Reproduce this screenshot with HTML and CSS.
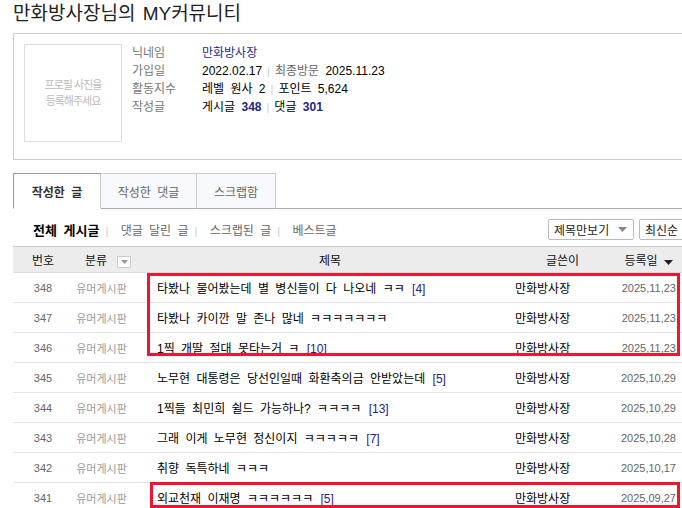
FILE: index.html
```html
<!DOCTYPE html>
<html lang="ko">
<head>
  <meta charset="UTF-8">
  <title>MY커뮤니티</title>
  <link rel="stylesheet" href="styles.css">
</head>
<body>
  <div class="wrap">
    <h1 class="page-title">만화방사장님의 MY커뮤니티</h1>

    <div class="profile">
      <div class="photo">프로필 사진을<br>등록해주세요</div>
      <div class="info">
        <div class="info-row"><span class="label">닉네임</span><span class="value nick">만화방사장</span></div>
        <div class="info-row"><span class="label">가입일</span><span class="value">2022.02.17<span class="sep">|</span><span class="dim">최종방문</span> 2025.11.23</span></div>
        <div class="info-row"><span class="label">활동지수</span><span class="value">레벨 원사 2<span class="sep">|</span>포인트 5,624</span></div>
        <div class="info-row"><span class="label">작성글</span><span class="value">게시글 <b class="count">348</b><span class="sep">|</span>댓글 <b class="count">301</b></span></div>
      </div>
    </div>

    <ul class="tabs">
      <li class="tab active">작성한 글</li>
      <li class="tab">작성한 댓글</li>
      <li class="tab">스크랩함</li>
    </ul>

    <div class="filter-bar">
      <div class="filters">
        <a href="#" class="on">전체 게시글</a><span class="sep">|</span>
        <a href="#">댓글 달린 글</a><span class="sep">|</span>
        <a href="#">스크랩된 글</a><span class="sep">|</span>
        <a href="#">베스트글</a>
      </div>
      <div class="sorts">
        <span class="select sel-view">제목만보기 <svg width="9" height="5" viewBox="0 0 9 5"><path d="M0 0h9L4.5 5z" fill="#888"/></svg></span>
        <span class="select sel-order">최신순 <svg width="9" height="5" viewBox="0 0 9 5"><path d="M0 0h9L4.5 5z" fill="#888"/></svg></span>
      </div>
    </div>

    <div class="list-box">
      <table class="post-table">
        <colgroup>
          <col style="width:60px">
          <col style="width:57px">
          <col style="width:370px">
          <col style="width:100px">
          <col style="width:93px">
        </colgroup>
        <thead>
          <tr>
            <th class="c-no">번호</th>
            <th class="c-cat">분류 <span class="mini-drop"><svg width="7" height="4" viewBox="0 0 7 4"><path d="M0 0h7L3.5 4z" fill="#999"/></svg></span></th>
            <th class="c-title">제목</th>
            <th class="c-author">글쓴이</th>
            <th class="c-date">등록일 <svg width="9" height="5" viewBox="0 0 9 5"><path d="M0 0h9L4.5 5z" fill="#222"/></svg></th>
          </tr>
        </thead>
        <tbody>
          <tr><td class="c-no">348</td><td class="c-cat">유머게시판</td><td class="c-title">타봤나 물어봤는데 별 병신들이 다 나오네 ㅋㅋ <span class="cmt">[4]</span></td><td class="c-author">만화방사장</td><td class="c-date">2025,11,23</td></tr>
          <tr><td class="c-no">347</td><td class="c-cat">유머게시판</td><td class="c-title">타봤나 카이깐 말 존나 많네 ㅋㅋㅋㅋㅋㅋㅋ</td><td class="c-author">만화방사장</td><td class="c-date">2025,11,23</td></tr>
          <tr><td class="c-no">346</td><td class="c-cat">유머게시판</td><td class="c-title">1찍 개딸 절대 못타는거 ㅋ <span class="cmt">[10]</span></td><td class="c-author">만화방사장</td><td class="c-date">2025,11,23</td></tr>
          <tr><td class="c-no">345</td><td class="c-cat">유머게시판</td><td class="c-title">노무현 대통령은 당선인일때 화환축의금 안받았는데 <span class="cmt">[5]</span></td><td class="c-author">만화방사장</td><td class="c-date">2025,10,29</td></tr>
          <tr><td class="c-no">344</td><td class="c-cat">유머게시판</td><td class="c-title">1찍들 최민희 쉴드 가능하나? ㅋㅋㅋㅋ <span class="cmt">[13]</span></td><td class="c-author">만화방사장</td><td class="c-date">2025,10,29</td></tr>
          <tr><td class="c-no">343</td><td class="c-cat">유머게시판</td><td class="c-title">그래 이게 노무현 정신이지 ㅋㅋㅋㅋㅋ <span class="cmt">[7]</span></td><td class="c-author">만화방사장</td><td class="c-date">2025,10,28</td></tr>
          <tr><td class="c-no">342</td><td class="c-cat">유머게시판</td><td class="c-title">취향 독특하네 ㅋㅋㅋ</td><td class="c-author">만화방사장</td><td class="c-date">2025,10,17</td></tr>
          <tr><td class="c-no">341</td><td class="c-cat">유머게시판</td><td class="c-title">외교천재 이재명 ㅋㅋㅋㅋㅋㅋ <span class="cmt">[5]</span></td><td class="c-author">만화방사장</td><td class="c-date">2025,09,27</td></tr>
        </tbody>
      </table>
      <!-- red marks over the rows -->
      <div class="mark mark-top"></div>
      <div class="mark mark-bottom"></div>
    </div>
  </div>
</body>
</html>
```

FILE: styles.css
```css
html, body {
  overflow: hidden;
}
body {
  margin: 0;
  padding: 0;
  font-family: "Liberation Sans", "Noto Sans CJK KR", sans-serif;
  font-size: 12px;
  word-spacing: 3px;
  color: #000;
  background: #fff;
}
.wrap {
  width: 680px;
  padding-left: 13px;
}
.page-title {
  margin: 0 0 5px;
  font-size: 19px;
  line-height: 28px;
  font-weight: normal;
  word-spacing: 2px;
  color: #222;
}

/* profile */
.profile {
  display: flex;
  height: 127px;
  box-sizing: border-box;
  border: 1px solid #ccc;
  padding: 10px 10px;
}
.photo {
  width: 98px;
  height: 98px;
  box-sizing: border-box;
  border: 1px solid #ddd;
  display: flex;
  align-items: center;
  justify-content: center;
  text-align: center;
  font-size: 11px;
  line-height: 16px;
  letter-spacing: -1px;
  word-spacing: 0;
  color: #bbb;
}
.info {
  margin-left: 10px;
}
.info-row {
  display: flex;
  line-height: 18px;
  white-space: nowrap;
}
.label {
  width: 70px;
  color: #777;
}
.value .dim {
  color: #666;
}
.nick {
  color: #1e2a8c;
}
.count {
  color: #1e2488;
}
.sep {
  color: #ccc;
  margin: 0 5px;
  font-size: 11px;
}

/* tabs */
.tabs {
  list-style: none;
  margin: 13px 0 0;
  padding: 0;
  display: flex;
  height: 36px;
  box-sizing: border-box;
  border-bottom: 1px solid #aaa;
}
.tab {
  height: 36px;
  box-sizing: border-box;
  border: 1px solid #ccc;
  border-left: none;
  border-bottom: 1px solid #aaa;
  background: #f7f9fc;
  color: #666;
  display: flex;
  align-items: center;
  justify-content: center;
  white-space: nowrap;
}
.tab:nth-child(2) {
  width: 96px;
}
.tab:nth-child(3) {
  width: 79px;
}
.tab.active {
  width: 88px;
  background: #fff;
  border-left: 1px solid #999;
  border-top: 1px solid #999;
  border-bottom: 1px solid #fff;
  font-weight: bold;
  color: #333;
}

/* filter bar */
.filter-bar {
  display: flex;
  align-items: center;
  justify-content: space-between;
  height: 37px;
  padding-top: 4px;
  box-sizing: border-box;
}
.filters {
  padding-left: 20px;
  white-space: nowrap;
}
.filters a {
  text-decoration: none;
  color: #666;
}
.filters a.on {
  color: #000;
  font-weight: bold;
  font-size: 13px;
}
.filters .sep {
  margin: 0 6px;
}
.sorts {
  display: flex;
  gap: 5px;
  margin-right: -6px;
}
.select {
  display: flex;
  align-items: center;
  justify-content: space-between;
  height: 21px;
  box-sizing: border-box;
  border: 1px solid #bbb;
  border-radius: 2px;
  padding: 0 6px 0 5px;
  color: #222;
  background: #fff;
  white-space: nowrap;
  flex-shrink: 0;
  word-spacing: 0;
}
.sel-view {
  width: 86px;
}
.sel-order {
  width: 60px;
}

/* list */
.list-box {
  position: relative;
}
.post-table {
  width: 680px;
  table-layout: fixed;
  border-collapse: collapse;
}
.post-table th {
  height: 25px;
  padding: 0;
  background: #ececec;
  border-top: 1px solid #ccc;
  border-bottom: 1px solid #ddd;
  font-weight: normal;
  color: #111;
  white-space: nowrap;
}
.post-table td {
  height: 29px;
  padding: 0;
  border-bottom: 1px solid #e3e3e3;
  white-space: nowrap;
  overflow: hidden;
}
th.c-no, td.c-no {
  text-align: center;
}
td.c-no {
  font-size: 11px;
  color: #666;
}
th.c-cat {
  text-align: center;
  padding-left: 12px;
}
td.c-cat {
  text-align: center;
  font-size: 11px;
  color: #999;
  overflow: visible;
}
.mini-drop {
  display: inline-flex;
  align-items: center;
  justify-content: center;
  width: 12px;
  height: 10px;
  margin-left: 4px;
  border: 1px solid #ccc;
  background: #fff;
  vertical-align: middle;
}
th.c-title {
  text-align: center;
  padding-left: 30px;
}
td.c-title {
  padding-left: 27px;
}
.cmt {
  color: #1e2488;
  margin-left: 1px;
}
th.c-author {
  text-align: left;
  padding-left: 46px;
}
td.c-author {
  padding-left: 15px;
}
th.c-date {
  text-align: right;
  padding-right: 20px;
}
td.c-date {
  text-align: right;
  padding-right: 17px;
  font-size: 11px;
  color: #666;
}
.mark {
  position: absolute;
  box-sizing: border-box;
  border: 3px solid #f3132e;
}
.mark-top {
  left: 134px;
  top: 27px;
  width: 533px;
  height: 83px;
}
.mark-bottom {
  left: 137px;
  top: 236px;
  width: 530px;
  height: 26px;
}
```
